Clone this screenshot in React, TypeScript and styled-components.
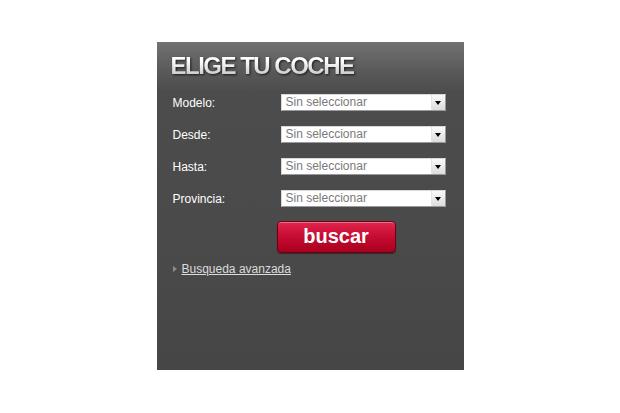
import React from 'react'
import styled, { createGlobalStyle } from 'styled-components'

const GlobalStyle = createGlobalStyle`
    body {
        margin: 0;
        background: #ffffff;
        font-family: "Liberation Sans", Arial, sans-serif;
    }
`

const fields = ['Modelo:', 'Desde:', 'Hasta:', 'Provincia:']

const Panel = styled.div`
    width: 307px;
    height: 328px;
    margin: 42px auto 0;
    box-sizing: border-box;
    background: linear-gradient(
        to bottom,
        #727272 0px,
        #5a5a5a 28px,
        #4c4c4c 50px,
        #4a4a4a 200px,
        #464646 100%
    );
`

const Header = styled.div`
    height: 52px;
    padding: 10px 0 0 14px;
    box-sizing: border-box;
`

const Title = styled.h1`
    margin: 0;
    display: inline-block;
    font-family: "Liberation Sans", Arial, sans-serif;
    font-weight: 700;
    font-size: 24px;
    line-height: 28px;
    letter-spacing: -1.5px;
    background: linear-gradient(to bottom, #ffffff 30%, #b9b9b9 100%);
    -webkit-background-clip: text;
    background-clip: text;
    color: transparent;
    filter: drop-shadow(1px 1px 1px rgba(0, 0, 0, 0.7));
`

const Form = styled.div`
    display: flex;
    flex-direction: column;
    gap: 15px;
    padding: 0 18px 0 16px;
`

const Row = styled.div`
    display: flex;
    align-items: center;
    height: 17px;
`

const Label = styled.label`
    width: 108px;
    color: #ffffff;
    font-size: 12px;
`

const SelectBox = styled.div`
    display: flex;
    align-items: stretch;
    width: 165px;
    height: 17px;
    box-sizing: border-box;
    background: #ffffff;
    border: 1px solid #d8d8d8;
    border-right-color: #9a9a9a;
    border-bottom-color: #9a9a9a;
`

const Value = styled.span`
    flex: 1;
    padding-left: 4px;
    color: #7a7a7a;
    font-size: 12px;
    line-height: 15px;
`

const ArrowButton = styled.span`
    width: 13px;
    display: flex;
    align-items: center;
    justify-content: center;
    background: linear-gradient(to bottom, #fafafa, #dcdcdc);
    border-left: 1px solid #e4e4e4;

    &::after {
        content: '';
        border-left: 3.5px solid transparent;
        border-right: 3.5px solid transparent;
        border-top: 4px solid #000000;
    }
`

const ButtonRow = styled.div`
    display: flex;
    padding: 14px 0 0 120px;
`

const SearchButton = styled.button`
    width: 119px;
    height: 32px;
    border: 1px solid #6e0012;
    border-radius: 4px;
    background: linear-gradient(to bottom, #e2264d 0%, #c80c33 45%, #a8001f 100%);
    box-shadow: inset 0 1px 0 rgba(255, 255, 255, 0.35), 0 1px 1px rgba(0, 0, 0, 0.4);
    color: #ffffff;
    font-family: "Liberation Sans", Arial, sans-serif;
    font-weight: 700;
    font-size: 20px;
    padding: 0 0 2px;
    cursor: pointer;
`

const AdvancedLink = styled.a`
    display: flex;
    align-items: center;
    gap: 5px;
    margin: 9px 0 0 16px;
    color: #dcdcdc;
    font-size: 12px;
    text-decoration: underline;
    cursor: pointer;

    &::before {
        content: '';
        border-top: 3px solid transparent;
        border-bottom: 3px solid transparent;
        border-left: 4px solid #8a8a8a;
    }
`

export default function App() {
    return (
        <>
            <GlobalStyle />
            <Panel>
                <Header>
                    <Title>ELIGE TU COCHE</Title>
                </Header>
                <Form>
                    {fields.map((f) => (
                        <Row key={f}>
                            <Label>{f}</Label>
                            <SelectBox>
                                <Value>Sin seleccionar</Value>
                                <ArrowButton />
                            </SelectBox>
                        </Row>
                    ))}
                </Form>
                <ButtonRow>
                    <SearchButton>buscar</SearchButton>
                </ButtonRow>
                <AdvancedLink>Busqueda avanzada</AdvancedLink>
            </Panel>
        </>
    )
}
